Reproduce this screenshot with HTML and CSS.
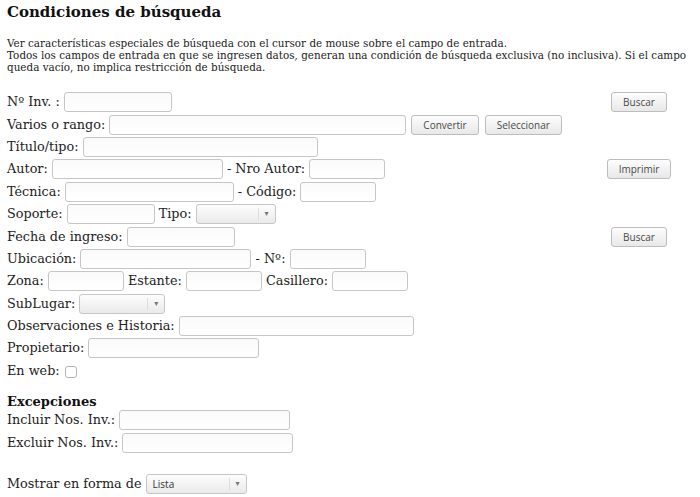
FILE: index.html
```html
<!DOCTYPE html>
<html lang="es">
<head>
    <meta charset="UTF-8">
    <meta name="viewport" content="width=device-width, initial-scale=1.0">
    <title>Condiciones de búsqueda</title>
    <link rel="stylesheet" href="styles.css">
</head>
<body>

    <div class="page">
        <h1>Condiciones de búsqueda</h1>

        <!-- Ayuda -->
        <p class="help">
            Ver características especiales de búsqueda con el cursor de mouse sobre el campo de entrada.<br>
            Todos los campos de entrada en que se ingresen datos, generan una condición de búsqueda exclusiva (no inclusiva). Si el campo<br>
            queda vacío, no implica restricción de búsqueda.
        </p>

        <form class="search">
            <div class="row">
                <div class="fields">Nº Inv. : <input type="text" class="w-sm"></div>
                <div class="side"><button type="button">Buscar</button></div>
            </div>
            <div class="row">
                <div class="fields">Varios o rango: <input type="text" class="w-xl"> <button type="button">Convertir</button> <button type="button">Seleccionar</button></div>
            </div>
            <div class="row">
                <div class="fields">Título/tipo: <input type="text" class="w-lg"></div>
            </div>
            <div class="row">
                <div class="fields">Autor: <input type="text" class="w-md"> - Nro Autor: <input type="text" class="w-xs"></div>
                <div class="side"><button type="button">Imprimir</button></div>
            </div>
            <div class="row">
                <div class="fields">Técnica: <input type="text" class="w-md2"> - Código: <input type="text" class="w-xs"></div>
            </div>
            <div class="row">
                <div class="fields">Soporte: <input type="text" class="w-soporte"> Tipo: <span class="select w-tipo"><select><option></option></select></span></div>
            </div>
            <div class="row">
                <div class="fields">Fecha de ingreso: <input type="text" class="w-sm"></div>
                <div class="side"><button type="button">Buscar</button></div>
            </div>
            <div class="row">
                <div class="fields">Ubicación: <input type="text" class="w-md"> - Nº: <input type="text" class="w-xs"></div>
            </div>
            <div class="row">
                <div class="fields">Zona: <input type="text" class="w-xs"> Estante: <input type="text" class="w-xs"> Casillero: <input type="text" class="w-xs"></div>
            </div>
            <div class="row">
                <div class="fields">SubLugar: <span class="select w-sub"><select><option></option></select></span></div>
            </div>
            <div class="row">
                <div class="fields">Observaciones e Historia: <input type="text" class="w-lg"></div>
            </div>
            <div class="row">
                <div class="fields">Propietario: <input type="text" class="w-md"></div>
            </div>
            <div class="row">
                <div class="fields">En web: <input type="checkbox"></div>
            </div>

            <!-- Excepciones -->
            <h2>Excepciones</h2>
            <div class="row">
                <div class="fields">Incluir Nos. Inv.: <input type="text" class="w-md"></div>
            </div>
            <div class="row">
                <div class="fields">Excluir Nos. Inv.: <input type="text" class="w-md"></div>
            </div>

            <div class="row show-as">
                <div class="fields">Mostrar en forma de <span class="select w-show"><select><option>Lista</option></select></span></div>
            </div>
        </form>
    </div>

</body>
</html>
```

FILE: styles.css
```css
/* Basic Styling */
body {
    margin: 0;
    background-color: #fff;
    color: #222;
    font-family: "DejaVu Serif", serif;
}

.page {
    padding: 3px 11px 0 7px;
}

h1 {
    margin: 0;
    font-size: 15px;
    line-height: 19px;
    color: #111;
}

.help {
    margin: 15px 0 18px;
    font-size: 10.4px;
    line-height: 12px;
    white-space: nowrap;
}

.search {
    font-size: 12.8px;
}

.row {
    display: flex;
    align-items: center;
    height: 22.4px;
}

.fields {
    flex: 1;
    white-space: nowrap;
}

.side {
    width: 100px;
    text-align: center;
}

h2 {
    margin: 12px 0 0;
    font-size: 13px;
    line-height: 15px;
    color: #111;
}

.show-as {
    margin-top: 18.6px;
}

/* Inputs */
input[type="text"] {
    box-sizing: border-box;
    height: 20px;
    margin: 0;
    padding: 0 4px;
    border: 1px solid #c6c6c6;
    border-radius: 3px;
    background: linear-gradient(#fafafa, #fff);
    vertical-align: middle;
    font-size: 12px;
}

input[type="checkbox"] {
    -webkit-appearance: none;
    appearance: none;
    box-sizing: border-box;
    width: 12px;
    height: 12px;
    margin: 0 0 0 1px;
    border: 1px solid #b4b4b4;
    border-radius: 3px;
    background: #fff;
    vertical-align: middle;
}

.w-xs { width: 76px; }
.w-sm { width: 108px; }
.w-md { width: 171px; }
.w-md2 { width: 169px; }
.w-lg { width: 235px; }
.w-xl { width: 297px; }
.w-soporte { width: 88px; }

/* Buttons */
button {
    box-sizing: border-box;
    height: 20px;
    margin: 0 1px;
    padding: 0 11px;
    font-family: "Open Sans", sans-serif;
    font-size: 10px;
    color: #4a4a4a;
    background: linear-gradient(#fdfdfd, #e8e8e8);
    border: 1px solid #bdbdbd;
    border-radius: 3px;
    vertical-align: middle;
    cursor: pointer;
}

button:hover {
    background: linear-gradient(#fff, #eee);
}

/* Selects */
.select {
    position: relative;
    display: inline-block;
    vertical-align: middle;
    height: 20px;
}

.select select {
    -webkit-appearance: none;
    appearance: none;
    box-sizing: border-box;
    width: 100%;
    height: 20px;
    margin: 0;
    padding: 0 20px 0 6px;
    font-family: "Open Sans", sans-serif;
    font-size: 10px;
    color: #333;
    background: linear-gradient(#fdfdfd, #eaeaea);
    border: 1px solid #c6c6c6;
    border-radius: 3px;
}

.select::after {
    content: "▾";
    position: absolute;
    top: 4px;
    right: 1px;
    width: 16px;
    height: 12px;
    border-left: 1px solid #ddd;
    font-family: "DejaVu Sans", sans-serif;
    font-size: 8px;
    line-height: 12px;
    text-align: center;
    color: #777;
    pointer-events: none;
}

.w-tipo { width: 80px; }
.w-sub { width: 86px; }
.w-show { width: 101px; }
```
